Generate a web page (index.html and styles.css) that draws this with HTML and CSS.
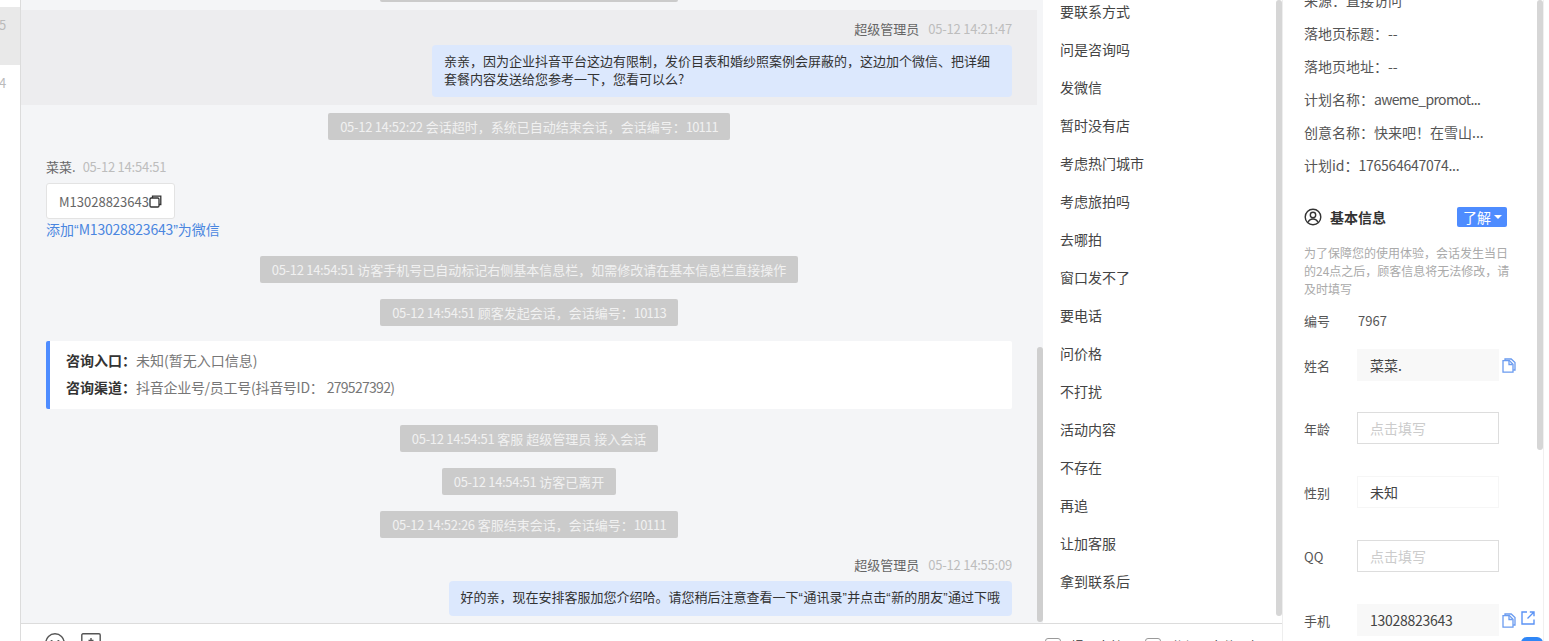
FILE: index.html
```html
<!DOCTYPE html>
<html lang="zh-CN">
<head>
<meta charset="utf-8">
<title>会话</title>
<link rel="stylesheet" href="styles.css">
</head>
<body>
<div class="app">
  <aside class="strip">
    <div class="strip-item active">5</div>
    <div class="strip-item">4</div>
  </aside>

  <main class="center">
    <div class="panes">
      <section class="chat">
        <div class="msgs">
          <div class="pill pill-clipped"></div>
          <div class="row-hl">
            <div class="meta meta-right"><span class="who">超级管理员</span><span class="time">05-12 14:21:47</span></div>
            <div class="bubble">亲亲，因为企业抖音平台这边有限制，发价目表和婚纱照案例会屏蔽的，这边加个微信、把详细套餐内容发送给您参考一下，您看可以么?</div>
          </div>
          <div class="pill"><span class="ts">05-12 14:52:22</span> 会话超时，系统已自动结束会话，会话编号：<span class="num">10111</span></div>
          <div class="visitor">
            <div class="meta"><span class="who">菜菜.</span><span class="time time-near">05-12 14:54:51</span></div>
            <div class="contact">M13028823643<svg class="ico-dup" viewBox="0 0 13 13"><rect x="1" y="3" width="9" height="9" rx="1.2"/><path d="M3.5 3V1.200h8.300v8.300H10"/></svg></div>
            <div class="addlink">添加<span class="q">“</span><span class="tight">M13028823643</span><span class="q">”</span>为微信</div>
          </div>
          <div class="pill"><span class="ts">05-12 14:54:51</span> 访客手机号已自动标记右侧基本信息栏，如需修改请在基本信息栏直接操作</div>
          <div class="pill"><span class="ts">05-12 14:54:51</span> 顾客发起会话，会话编号：<span class="num">10113</span></div>
          <div class="infocard">
            <div class="inforow"><b>咨询入口：</b><span>未知(暂无入口信息)</span></div>
            <div class="inforow"><b>咨询渠道：</b><span class="squeeze">抖音企业号/员工号(抖音号ID：</span> <span class="idnum">279527392)</span></div>
          </div>
          <div class="pill"><span class="ts">05-12 14:54:51</span> 客服 超级管理员 接入会话</div>
          <div class="pill"><span class="ts">05-12 14:54:51</span> 访客已离开</div>
          <div class="pill"><span class="ts">05-12 14:52:26</span> 客服结束会话，会话编号：<span class="num">10111</span></div>
          <div class="agent">
            <div class="meta meta-right"><span class="who">超级管理员</span><span class="time">05-12 14:55:09</span></div>
            <div class="bubble">好的亲，现在安排客服加您介绍哈。请您稍后注意查看一下<span class="q">“</span>通讯录<span class="q">”</span>并点击<span class="q">“</span>新的朋友<span class="q">”</span>通过下哦</div>
          </div>
        </div>
        <div class="track track-chat"><div class="thumb"></div></div>
      </section>

      <section class="quick">
        <ul class="quick-list">
          <li>要联系方式</li>
          <li>问是咨询吗</li>
          <li>发微信</li>
          <li>暂时没有店</li>
          <li>考虑热门城市</li>
          <li>考虑旅拍吗</li>
          <li>去哪拍</li>
          <li>窗口发不了</li>
          <li>要电话</li>
          <li>问价格</li>
          <li>不打扰</li>
          <li>活动内容</li>
          <li>不存在</li>
          <li>再追</li>
          <li>让加客服</li>
          <li>拿到联系后</li>
        </ul>
        <div class="track track-quick"><div class="thumb"></div></div>
      </section>
    </div>

    <footer class="composer">
      <div class="tools">
        <svg class="tool" viewBox="0 0 20 20"><circle cx="10" cy="10" r="9.200"/><circle cx="6.600" cy="8" r="1.100" class="fill"/><circle cx="13.400" cy="8" r="1.100" class="fill"/><path d="M6 12.500c1 1.700 2.400 2.500 4 2.500s3-.8 4-2.500"/></svg>
        <svg class="tool" viewBox="0 0 20 20"><rect x=".8" y=".8" width="18.400" height="18.400" rx="1.200"/><path d="M10 5v5M7.500 7.500h5"/></svg>
      </div>
      <div class="checks">
        <label class="check"><i class="box"></i>提示音效</label>
        <label class="check"><i class="box"></i>分组下文件回复</label>
      </div>
    </footer>
  </main>

  <aside class="side">
    <div class="side-body">
      <div class="source">
        <p>来源：直接访问</p>
        <p>落地页标题：--</p>
        <p>落地页地址：--</p>
        <p>计划名称：<span class="wide-latin">aweme_promot...</span></p>
        <p>创意名称：快来吧！在雪山...</p>
        <p>计划id：<span class="digits">176564647074...</span></p>
      </div>
      <div class="sec-head">
        <svg class="ico-user" viewBox="0 0 18 18"><circle cx="9" cy="9" r="7.800"/><circle cx="9" cy="7" r="2.700"/><path d="M4.200 14.200c.8-2.200 2.600-3.200 4.800-3.200s4 1 4.800 3.200"/></svg>
        <h3>基本信息</h3>
        <span class="badge">了解<i class="caret"></i></span>
      </div>
      <p class="tip">为了保障您的使用体验，会话发生当日的24点之后，顾客信息将无法修改，请及时填写</p>
      <div class="plain-row"><span class="lbl">编号</span><span>7967</span></div>
      <div class="field-row"><span class="lbl">姓名</span><div class="field filled">菜菜.</div>
        <svg class="ico-copy" viewBox="0 0 14 15"><path d="M3 2.500V1h6.200L13 4.600V12h-1.800"/><path d="M1 2.600h6.400L11 6.200v8H1z"/><path d="M7 3v3.500h3.600"/></svg>
      </div>
      <div class="field-row"><span class="lbl">年龄</span><div class="field empty">点击填写</div></div>
      <div class="field-row"><span class="lbl">性别</span><div class="field plain">未知</div></div>
      <div class="field-row"><span class="lbl">QQ</span><div class="field empty">点击填写</div></div>
      <div class="field-row"><span class="lbl">手机</span><div class="field filled"><span class="digits">13028823643</span></div>
        <svg class="ico-copy" viewBox="0 0 14 15"><path d="M3 2.500V1h6.200L13 4.600V12h-1.800"/><path d="M1 2.600h6.400L11 6.200v8H1z"/><path d="M7 3v3.500h3.600"/></svg>
        <svg class="ico-open" viewBox="0 0 14 14"><path d="M6 1H1v12h12V8.500"/><path d="M6.500 7.500 13 1M8.800 1H13v4.200"/></svg>
      </div>
    </div>
    <div class="track track-side"><div class="thumb"></div></div>
    <div class="fab"></div>
  </aside>
</div>
</body>
</html>
```
FILE: styles.css
```css
* { box-sizing: border-box; }
html, body { margin: 0; height: 100%; overflow: hidden; background: #fff; }
body { font-family: "Noto Sans CJK SC", "Noto Sans", sans-serif; font-size: 13px; color: #333; }
.app { display: flex; height: 641px; overflow: hidden; }

.strip { width: 21px; flex: none; border-right: 1px solid #dcdcdc; padding-top: 7px; color: #bbb; font-size: 13px; overflow: hidden; }
.strip-item { height: 58px; padding-top: 9px; line-height: 18px; margin-left: -1px; }
.strip-item.active { background: #e9e9e9; }

.center { width: 1262px; flex: none; display: flex; flex-direction: column; border-right: 1px solid #eee; }
.panes { height: 623px; display: flex; overflow: hidden; }

.chat { width: 1022px; flex: none; display: flex; background: #f4f5f7; }
.msgs { width: 1016px; flex: none; display: flex; flex-direction: column; align-items: center; gap: 16px; margin-top: -25px; padding: 0 25px; }
.pill { height: 27px; line-height: 27px; padding: 0 12px; background: #cbcbcb; color: #f1f1f1; border-radius: 2px; white-space: nowrap; flex: none; }
.pill-clipped { width: 298px; }
.ts { letter-spacing: -.3px; }
.num { letter-spacing: -.8px; }

.meta { display: flex; height: 18px; line-height: 18px; color: #666; }
.meta-right { justify-content: flex-end; }
.time { margin-left: 9px; color: #bdbdbd; letter-spacing: -.22px; }
.time-near { margin-left: 7px; }
.who { color: #666; }

.row-hl { align-self: stretch; margin: -8px -25px; padding: 10px 25px 8px; background: #ededef; display: flex; flex-direction: column; align-items: flex-end; height: 95px; flex: none; }
.row-hl .bubble { margin-top: 7px; }
.bubble { width: fit-content; max-width: 580px; padding: 7px 12px 9px; line-height: 18px; background: #dce8fd; border-radius: 4px; color: #333; }
.q { font-family: "Liberation Sans", sans-serif; }
.agent .q { letter-spacing: .5px; }

.visitor { align-self: stretch; margin-top: 2px; flex: none; }
.contact { display: flex; align-items: center; width: 129px; height: 36px; margin-top: 7px; padding-left: 12px; background: #fff; border: 1px solid #e3e3e3; border-radius: 3px; color: #666; white-space: nowrap; }
.ico-dup { width: 13px; height: 13px; flex: none; fill: none; stroke: #333; stroke-width: 1.3; }
.addlink { margin-top: 1px; height: 20px; line-height: 18px; font-size: 14px; color: #4a86e0; }
.tight { letter-spacing: -.2px; }

.infocard { align-self: stretch; height: 68px; margin-top: -1px; flex: none; padding: 6px 16px 0; background: #fff; border-left: 4px solid #4e8cff; border-radius: 2px; font-size: 14px; }
.inforow { height: 27px; line-height: 27px; color: #777; }
.inforow b { color: #333; font-weight: 700; }
.squeeze { letter-spacing: -.28px; }
.idnum { letter-spacing: -.7px; }

.agent { align-self: stretch; margin-top: 2px; display: flex; flex-direction: column; align-items: flex-end; flex: none; }
.agent .bubble { margin-top: 7px; max-width: none; white-space: nowrap; }

.track { width: 6px; flex: none; }
.thumb { background: #cfcfcf; border-radius: 3px; }
.track-chat .thumb { margin-top: 347px; height: 275px; }
.track-quick .thumb { height: 616px; background: #d6d6d6; }
.track-side { border-right: 1px solid #f0f0f0; width: 7px; }
.track-side .thumb { height: 450px; width: 6px; background: #d6d6d6; }

.quick { flex: 1; display: flex; background: #fff; overflow: hidden; }
.quick-list { flex: 1; list-style: none; margin: -8px 0 0; padding: 0 0 0 17px; font-size: 14px; color: #444; }
.quick-list li { height: 38px; line-height: 38px; }

.composer { height: 18px; flex: none; display: flex; justify-content: space-between; padding: 9px 21px 0 24px; border-top: 1px solid #dcdcdc; overflow: hidden; background: #fff; }
.tools { display: flex; gap: 16px; }
.tool { width: 20px; height: 20px; flex: none; fill: none; stroke: #555; stroke-width: 1.4; }
.tool .fill { fill: #555; stroke: none; }
.checks { display: flex; width: 216px; gap: 10px; margin-top: 5px; }
.check { display: flex; gap: 10px; color: #333; line-height: 16px; width: 90px; flex: none; white-space: nowrap; }
.box { width: 16px; height: 16px; border: 1px solid #999; border-radius: 3px; flex: none; }

.side { position: relative; flex: 1; display: flex; overflow: hidden; }
.side-body { width: 254px; flex: none; padding: 0 20px 0 21px; margin-top: -16px; color: #555; }
.side-body p { margin: 0; }
.source p { height: 33px; line-height: 33px; white-space: nowrap; font-size: 14px; }
.wide-latin { letter-spacing: -.65px; }
.digits { letter-spacing: -.28px; }
.sec-head { display: flex; align-items: center; margin-top: 25px; height: 20px; }
.ico-user { width: 18px; height: 18px; flex: none; fill: none; stroke: #333; stroke-width: 1.4; }
.sec-head h3 { margin: 0 0 0 8px; font-size: 14px; font-weight: 700; color: #333; }
.badge { margin-left: auto; margin-right: 10px; width: 50px; height: 20px; line-height: 20px; padding-left: 6px; background: #4e8cff; border-radius: 2px; color: #fff; font-size: 14px; display: flex; align-items: center; }
.caret { margin-left: 3px; border: 4px solid transparent; border-top-color: #fff; border-bottom-width: 0; }
.side-body .tip { width: 212px; margin-top: 17px; font-size: 12px; line-height: 18px; color: #aaa; }
.plain-row { display: flex; margin-top: 14px; height: 18px; line-height: 18px; }
.lbl { width: 53px; flex: none; }
.plain-row .lbl { width: 54px; }
.field-row { display: flex; align-items: center; height: 32px; margin-top: 32px; position: relative; }
.plain-row + .field-row { margin-top: 19px; }
.plain-row + .field-row + .field-row { margin-top: 31px; }
.field { width: 142px; height: 32px; line-height: 30px; padding-left: 12px; border: 1px solid transparent; flex: none; color: #444; font-size: 14px; }
.field.filled { background: #f8f8f8; }
.field.plain { border-color: #f6f6f6; }
.field.empty { border-color: #ddd; color: #ccc; }
.ico-copy { width: 14px; height: 15px; margin-left: 3px; flex: none; fill: none; stroke: #6a9bf0; stroke-width: 1.3; }
.ico-open { width: 14px; height: 14px; margin-left: 5px; margin-top: -4px; flex: none; fill: none; stroke: #5b93f5; stroke-width: 1.4; }
.fab { position: absolute; left: 238px; top: 637px; width: 22px; height: 20px; background: #2f86f6; border-radius: 6px 6px 0 0; }
```
